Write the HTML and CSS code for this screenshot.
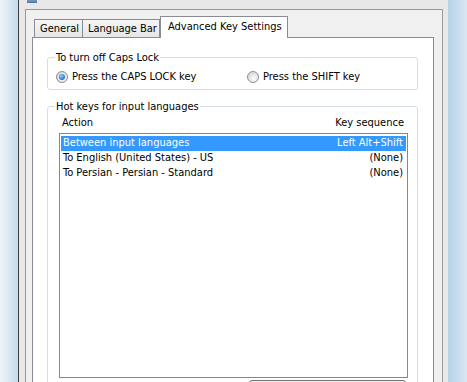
FILE: index.html
```html
<!DOCTYPE html>
<html lang="en">
<head>
  <meta charset="UTF-8" />
  <title>Text Services and Input Languages</title>
  <link rel="stylesheet" href="styles.css">
</head>
<body>
  <div class="screen">
    <div class="glass glass-left"></div>

    <div class="client">
      <!-- Title bar, only its lower edge is visible -->
      <div class="titlebar">
        <span class="app-icon"></span>
      </div>

      <div class="frame">
        <!-- Tabs -->
        <div class="tabs">
          <div class="tab tab-general">General</div>
          <div class="tab tab-langbar">Language Bar</div>
          <div class="tab tab-advanced active">Advanced Key Settings</div>
        </div>

        <div class="tab-page">
          <fieldset class="group caps-group">
            <legend>To turn off Caps Lock</legend>
            <div class="radio-row">
              <label class="radio-option first"><span class="radio checked"></span>Press the CAPS LOCK key</label>
              <label class="radio-option"><span class="radio"></span>Press the SHIFT key</label>
            </div>
          </fieldset>

          <fieldset class="group hotkey-group">
            <legend>Hot keys for input languages</legend>
            <div class="list-header">
              <span>Action</span>
              <span>Key sequence</span>
            </div>
            <div class="listbox">
              <div class="list-row selected"><span>Between input languages</span><span>Left Alt+Shift</span></div>
              <div class="list-row"><span>To English (United States) - US</span><span>(None)</span></div>
              <div class="list-row"><span>To Persian - Persian - Standard</span><span>(None)</span></div>
            </div>
            <!-- button continues below the visible area -->
            <div class="button-row">
              <button class="win-btn" aria-label="Change Key Sequence..."></button>
            </div>
          </fieldset>
        </div>
      </div>
    </div>

    <div class="glass glass-right"></div>
  </div>
</body>
</html>
```

FILE: styles.css
```css
html, body {
  margin: 0;
  background: #f0f0f0;
}

body {
  font-family: "DejaVu Sans Condensed", "DejaVu Sans", sans-serif;
  font-stretch: condensed;
  font-size: 11px;
  line-height: 13px;
  color: #000;
}

.screen {
  display: flex;
  height: 382px;
  overflow: hidden;
}

/* Aero glass edges */
.glass {
  width: 19px;
  flex-shrink: 0;
}

.glass-left {
  width: 18px;
  background: linear-gradient(to right, #eef4fa, #c6dbeb);
  border-right: 1px solid #3c3c3c;
}

.glass-right {
  background: linear-gradient(to right, #b5d2e8, #d9e8f4);
}

.client {
  width: 429px;
  flex-shrink: 0;
  padding: 0 5px 0 6px;
  box-sizing: border-box;
  background: #e8e8e8;
}

.titlebar {
  height: 9px;
  overflow: hidden;
}

.app-icon {
  display: block;
  width: 10px;
  height: 3px;
  margin-left: 2px;
  background: linear-gradient(#7d9cc4, #4c6f9c);
}

.frame {
  border: 1px solid #9a9a9a;
  background: #f0f0f0;
  padding: 0 8px 0 6px;
  height: 400px;
}

/* Tabs */
.tabs {
  display: flex;
  padding: 6px 0 0 2px;
}

.tab {
  box-sizing: border-box;
  height: 18px;
  margin-top: 3px;
  padding: 2px 0 0 5px;
  border: 1px solid #898c95;
  border-bottom: none;
  background: linear-gradient(#f5f5f5, #e6e6e6);
  white-space: nowrap;
}

.tab-general {
  width: 49px;
}

.tab-langbar {
  width: 77px;
  border-left: none;
}

.tab.active {
  position: relative;
  z-index: 1;
  width: 128px;
  height: 22px;
  margin-top: 0;
  padding: 3px 0 0 7px;
  background: #fff;
}

.tab-page {
  border: 1px solid #898c95;
  background: #fff;
  margin-top: -1px;
  padding: 0 15px 0 14px;
  height: 400px;
}

/* Group boxes */
.group {
  margin: 0;
  padding: 0;
  min-width: 0;
  border: 1px solid #d5dfe5;
  border-radius: 3px;
}

.group legend {
  margin-left: 7px;
  padding: 0 1px;
  line-height: 13px;
}

.caps-group {
  margin-top: 13px;
}

.hotkey-group {
  margin-top: 10px;
}

.radio-row {
  display: flex;
  height: 13px;
  margin: 6px 0 6px 8px;
}

.radio-option {
  display: flex;
  align-items: center;
  white-space: nowrap;
}

.radio-option.first {
  width: 191px;
}

.radio {
  box-sizing: border-box;
  width: 12px;
  height: 12px;
  margin-right: 4px;
  border: 1px solid #8e8f8f;
  border-radius: 50%;
  background: radial-gradient(circle at 60% 65%, #fdfdfd, #d6d6d6 80%);
  display: flex;
  align-items: center;
  justify-content: center;
}

.radio.checked::after {
  content: "";
  width: 6px;
  height: 6px;
  border-radius: 50%;
  background: radial-gradient(circle at 40% 35%, #9ad0f7, #2f86d6 55%, #15589f);
}

/* Hot key list */
.list-header {
  display: flex;
  justify-content: space-between;
  margin: 3px 13px 0 14px;
}

.listbox {
  box-sizing: border-box;
  height: 245px;
  margin: 4px 9px 0 11px;
  padding: 2px 1px;
  border: 1px solid #828790;
  background: #fff;
}

.list-row {
  display: flex;
  justify-content: space-between;
  height: 15px;
  padding: 0 3px 0 2px;
}

.list-row.selected {
  background: #3399ff;
  color: #fff;
}

.button-row {
  display: flex;
  justify-content: flex-end;
  margin: 2px 11px 0 0;
}

.win-btn {
  width: 157px;
  height: 23px;
  font: inherit;
  border: 1px solid #707070;
  border-radius: 3px;
  background: linear-gradient(#f2f2f2, #ebebeb 50%, #dddddd 50%, #cfcfcf);
}
```
